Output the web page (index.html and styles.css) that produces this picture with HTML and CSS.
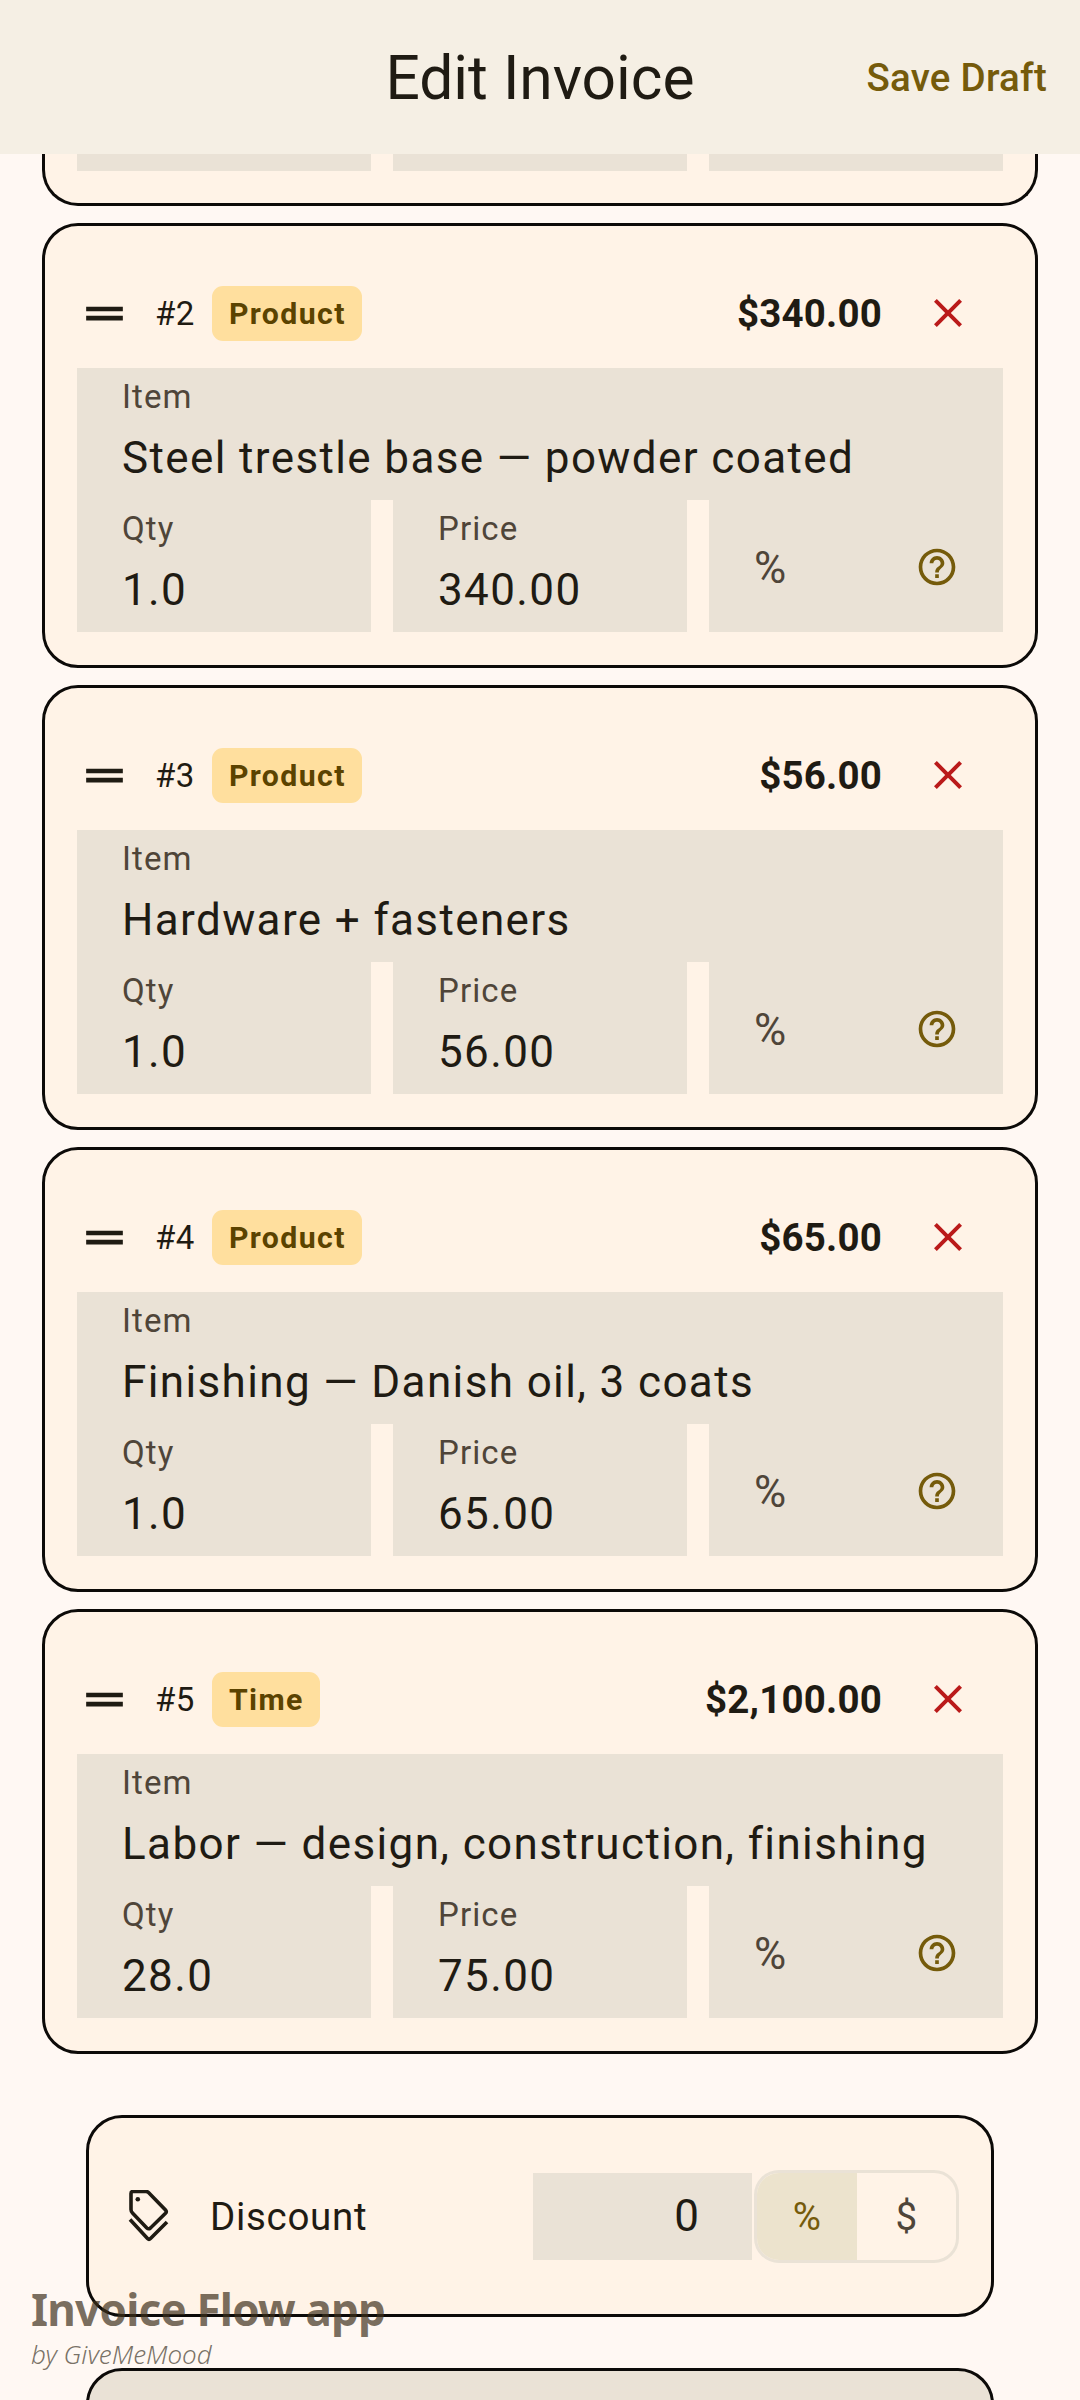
FILE: index.html
```html
<!DOCTYPE html>
<html lang="en">
<head>
    <meta charset="UTF-8">
    <meta name="viewport" content="width=device-width, initial-scale=1.0">
    <title>Edit Invoice</title>
    <link rel="stylesheet" href="styles.css">
</head>
<body>

<header class="top-bar">
    <h1 class="top-title">Edit Invoice</h1>
    <a class="top-action">Save Draft</a>
</header>

<main class="lines">
    <!-- Line #1, scrolled under the top bar -->
    <div class="card card-cut">
        <div class="field-stub"></div>
        <div class="field-stub"></div>
        <div class="field-stub"></div>
    </div>

    <section class="card">
        <div class="card-head">
            <svg class="icon-drag" viewBox="0 0 24 24"><path d="M20 9H4v2h16V9zM4 15h16v-2H4v2z"/></svg>
            <span class="line-no">#2</span>
            <span class="chip">Product</span>
            <span class="amount">$340.00</span>
            <svg class="icon-close" viewBox="0 0 24 24"><path d="M19 6.41L17.59 5 12 10.59 6.41 5 5 6.41 10.59 12 5 17.59 6.41 19 12 13.41 17.59 19 19 17.59 13.41 12z"/></svg>
        </div>
        <div class="field field-item">
            <label class="field-label">Item</label>
            <div class="field-value">Steel trestle base — powder coated</div>
        </div>
        <div class="field-row">
            <div class="field"><label class="field-label">Qty</label><div class="field-value">1.0</div></div>
            <div class="field"><label class="field-label">Price</label><div class="field-value">340.00</div></div>
            <div class="field field-tax">
                <span class="tax-sign">%</span>
                <svg class="icon-help" viewBox="0 0 24 24"><path d="M11 18h2v-2h-2v2zm1-16C6.48 2 2 6.48 2 12s4.48 10 10 10 10-4.48 10-10S17.52 2 12 2zm0 18c-4.41 0-8-3.59-8-8s3.59-8 8-8 8 3.59 8 8-3.59 8-8 8zm0-14c-2.21 0-4 1.79-4 4h2c0-1.1.9-2 2-2s2 .9 2 2c0 2-3 1.75-3 5h2c0-2.25 3-2.5 3-5 0-2.21-1.79-4-4-4z"/></svg>
            </div>
        </div>
    </section>

    <section class="card">
        <div class="card-head">
            <svg class="icon-drag" viewBox="0 0 24 24"><path d="M20 9H4v2h16V9zM4 15h16v-2H4v2z"/></svg>
            <span class="line-no">#3</span>
            <span class="chip">Product</span>
            <span class="amount">$56.00</span>
            <svg class="icon-close" viewBox="0 0 24 24"><path d="M19 6.41L17.59 5 12 10.59 6.41 5 5 6.41 10.59 12 5 17.59 6.41 19 12 13.41 17.59 19 19 17.59 13.41 12z"/></svg>
        </div>
        <div class="field field-item">
            <label class="field-label">Item</label>
            <div class="field-value">Hardware + fasteners</div>
        </div>
        <div class="field-row">
            <div class="field"><label class="field-label">Qty</label><div class="field-value">1.0</div></div>
            <div class="field"><label class="field-label">Price</label><div class="field-value">56.00</div></div>
            <div class="field field-tax">
                <span class="tax-sign">%</span>
                <svg class="icon-help" viewBox="0 0 24 24"><path d="M11 18h2v-2h-2v2zm1-16C6.48 2 2 6.48 2 12s4.48 10 10 10 10-4.48 10-10S17.52 2 12 2zm0 18c-4.41 0-8-3.59-8-8s3.59-8 8-8 8 3.59 8 8-3.59 8-8 8zm0-14c-2.21 0-4 1.79-4 4h2c0-1.1.9-2 2-2s2 .9 2 2c0 2-3 1.75-3 5h2c0-2.25 3-2.5 3-5 0-2.21-1.79-4-4-4z"/></svg>
            </div>
        </div>
    </section>

    <section class="card">
        <div class="card-head">
            <svg class="icon-drag" viewBox="0 0 24 24"><path d="M20 9H4v2h16V9zM4 15h16v-2H4v2z"/></svg>
            <span class="line-no">#4</span>
            <span class="chip">Product</span>
            <span class="amount">$65.00</span>
            <svg class="icon-close" viewBox="0 0 24 24"><path d="M19 6.41L17.59 5 12 10.59 6.41 5 5 6.41 10.59 12 5 17.59 6.41 19 12 13.41 17.59 19 19 17.59 13.41 12z"/></svg>
        </div>
        <div class="field field-item">
            <label class="field-label">Item</label>
            <div class="field-value">Finishing — Danish oil, 3 coats</div>
        </div>
        <div class="field-row">
            <div class="field"><label class="field-label">Qty</label><div class="field-value">1.0</div></div>
            <div class="field"><label class="field-label">Price</label><div class="field-value">65.00</div></div>
            <div class="field field-tax">
                <span class="tax-sign">%</span>
                <svg class="icon-help" viewBox="0 0 24 24"><path d="M11 18h2v-2h-2v2zm1-16C6.48 2 2 6.48 2 12s4.48 10 10 10 10-4.48 10-10S17.52 2 12 2zm0 18c-4.41 0-8-3.59-8-8s3.59-8 8-8 8 3.59 8 8-3.59 8-8 8zm0-14c-2.21 0-4 1.79-4 4h2c0-1.1.9-2 2-2s2 .9 2 2c0 2-3 1.75-3 5h2c0-2.25 3-2.5 3-5 0-2.21-1.79-4-4-4z"/></svg>
            </div>
        </div>
    </section>

    <section class="card">
        <div class="card-head">
            <svg class="icon-drag" viewBox="0 0 24 24"><path d="M20 9H4v2h16V9zM4 15h16v-2H4v2z"/></svg>
            <span class="line-no">#5</span>
            <span class="chip">Time</span>
            <span class="amount">$2,100.00</span>
            <svg class="icon-close" viewBox="0 0 24 24"><path d="M19 6.41L17.59 5 12 10.59 6.41 5 5 6.41 10.59 12 5 17.59 6.41 19 12 13.41 17.59 19 19 17.59 13.41 12z"/></svg>
        </div>
        <div class="field field-item">
            <label class="field-label">Item</label>
            <div class="field-value">Labor — design, construction, finishing</div>
        </div>
        <div class="field-row">
            <div class="field"><label class="field-label">Qty</label><div class="field-value">28.0</div></div>
            <div class="field"><label class="field-label">Price</label><div class="field-value">75.00</div></div>
            <div class="field field-tax">
                <span class="tax-sign">%</span>
                <svg class="icon-help" viewBox="0 0 24 24"><path d="M11 18h2v-2h-2v2zm1-16C6.48 2 2 6.48 2 12s4.48 10 10 10 10-4.48 10-10S17.52 2 12 2zm0 18c-4.41 0-8-3.59-8-8s3.59-8 8-8 8 3.59 8 8-3.59 8-8 8zm0-14c-2.21 0-4 1.79-4 4h2c0-1.1.9-2 2-2s2 .9 2 2c0 2-3 1.75-3 5h2c0-2.25 3-2.5 3-5 0-2.21-1.79-4-4-4z"/></svg>
            </div>
        </div>
    </section>
</main>

<section class="discount">
    <svg class="icon-tag" viewBox="0 0 40 52">
        <path d="M2.500 3.500Q2.500 1.500 4.500 1.500H17.500Q19 1.500 20 2.500L37 20Q38.500 21.700 37 23.300L22 38Q20 39.500 18.300 38L4 23Q2.500 21.500 2.500 19.500Z"/>
        <path d="M1.500 29.500L19 48.500Q20.500 50 22 48.500L38.500 32"/>
        <circle class="tag-dot" cx="9.300" cy="9.300" r="2.300"/>
    </svg>
    <span class="discount-label">Discount</span>
    <div class="discount-input">0</div>
    <div class="segment">
        <span class="segment-item segment-on">%</span>
        <span class="segment-item">$</span>
    </div>
</section>

<section class="next-card"></section>

<!-- Marca de agua -->
<div class="watermark">
    <div class="watermark-name">Invoice Flow app</div>
    <div class="watermark-by">by GiveMeMood</div>
</div>

</body>
</html>
```

FILE: styles.css
```css
/* General */
html, body {
    margin: 0;
    padding: 0;
    height: 2400px;
    overflow: hidden;
    background-color: #fff8f3;
    font-family: Roboto, sans-serif;
    color: #1f1b13;
}

/* Top bar */
.top-bar {
    height: 154px;
    background-color: #f5efe4;
    position: relative;
    display: flex;
    align-items: center;
    justify-content: flex-end;
    padding-right: 33px;
    box-sizing: border-box;
}

.top-title {
    position: absolute;
    left: 0;
    right: 0;
    top: 2px;
    margin: 0;
    text-align: center;
    font-size: 60.5px;
    font-weight: 400;
    line-height: 154px;
}

.top-action {
    color: #755b0b;
    font-size: 38.5px;
    font-weight: 500;
    letter-spacing: 0.25px;
}

/* Invoice lines */
.lines {
    display: flex;
    flex-direction: column;
    gap: 17px;
    padding: 0 42px;
}

.card {
    height: 445px;
    box-sizing: border-box;
    padding: 0 32px;
    background-color: #fff3e7;
    border: 3px solid #0c0a08;
    border-radius: 36px;
}

.card-cut {
    height: 52px;
    border-top: none;
    border-top-left-radius: 0;
    border-top-right-radius: 0;
    display: grid;
    grid-template-columns: repeat(3, 1fr);
    gap: 22px;
}

.field-stub {
    height: 17px;
    background-color: #eae2d6;
}

.card-head {
    height: 142px;
    display: flex;
    align-items: center;
    padding-top: 32px;
    box-sizing: border-box;
}

.icon-drag {
    width: 55px;
    height: 55px;
    fill: #1f1b13;
}

.line-no {
    margin-left: 23px;
    font-size: 33px;
    letter-spacing: 0.5px;
}

.chip {
    margin-left: 17px;
    height: 55px;
    padding: 0 16px 0 17px;
    display: flex;
    align-items: center;
    background-color: #ffdf9e;
    border-radius: 11px;
    color: #5b4300;
    font-size: 30.25px;
    font-weight: 700;
    letter-spacing: 1.4px;
}

.amount {
    margin-left: auto;
    font-size: 38.5px;
    font-weight: 700;
    letter-spacing: 0.2px;
}

.icon-close {
    width: 48px;
    height: 48px;
    fill: #ba1a1a;
    margin: 0 31px 0 42px;
}

/* Text fields */
.field {
    height: 132px;
    box-sizing: border-box;
    padding: 9px 45px 0;
    background-color: #eae2d6;
}

.field-label {
    display: block;
    font-size: 33px;
    line-height: 40px;
    letter-spacing: 1.1px;
    color: #4f4539;
}

.field-value {
    margin-top: 15px;
    font-size: 44px;
    line-height: 52px;
    letter-spacing: 1.375px;
    white-space: nowrap;
}

.field-row {
    display: grid;
    grid-template-columns: repeat(3, 1fr);
    gap: 22px;
}

.field-tax {
    display: flex;
    align-items: center;
    justify-content: space-between;
    padding: 2px 44px 0 45px;
}

.tax-sign {
    font-size: 44px;
    color: #4f4539;
    margin-top: 1px;
}

.icon-help {
    width: 44px;
    height: 44px;
    fill: #755b0b;
}

/* Discount */
.discount {
    height: 202px;
    box-sizing: border-box;
    margin: 61px 86px 51px;
    padding: 0 32px 0 39px;
    display: flex;
    align-items: center;
    background-color: #fff3e7;
    border: 3px solid #0c0a08;
    border-radius: 36px;
}

.icon-tag {
    width: 41px;
    height: 52px;
    fill: none;
    stroke: #1f1b13;
    stroke-width: 3.6;
}

.tag-dot {
    fill: #1f1b13;
    stroke: none;
}

.discount-label {
    margin-left: 41px;
    font-size: 38.5px;
    letter-spacing: 0.7px;
}

.discount-input {
    margin-left: auto;
    width: 219px;
    height: 87px;
    box-sizing: border-box;
    padding-right: 53px;
    background-color: #eae2d6;
    text-align: right;
    font-size: 44px;
    line-height: 87px;
}

.segment {
    margin-left: 2px;
    width: 205px;
    height: 93px;
    box-sizing: border-box;
    display: grid;
    grid-template-columns: 1fr 1fr;
    border: 3px solid #eae2d6;
    border-radius: 25px;
    overflow: hidden;
}

.segment-item {
    display: flex;
    align-items: center;
    justify-content: center;
    font-size: 38.5px;
    color: #4f4539;
}

.segment-on {
    background-color: #ece3cd;
    color: #755b0b;
}

.next-card {
    height: 120px;
    box-sizing: border-box;
    margin: 0 86px;
    background-color: #eae2d6;
    border: 3px solid #0c0a08;
    border-radius: 36px;
}

/* Watermark over the content */
.watermark {
    position: absolute;
    left: 31px;
    top: 2279px;
}

.watermark-name {
    font-family: "Noto Sans", sans-serif;
    font-size: 44px;
    font-weight: 700;
    line-height: 60px;
    letter-spacing: -0.8px;
    color: rgba(62, 48, 28, 0.7);
}

.watermark-by {
    font-family: "Noto Sans", sans-serif;
    font-size: 26px;
    font-style: italic;
    font-weight: 300;
    line-height: 30px;
    color: rgba(62, 54, 40, 0.7);
}
```
